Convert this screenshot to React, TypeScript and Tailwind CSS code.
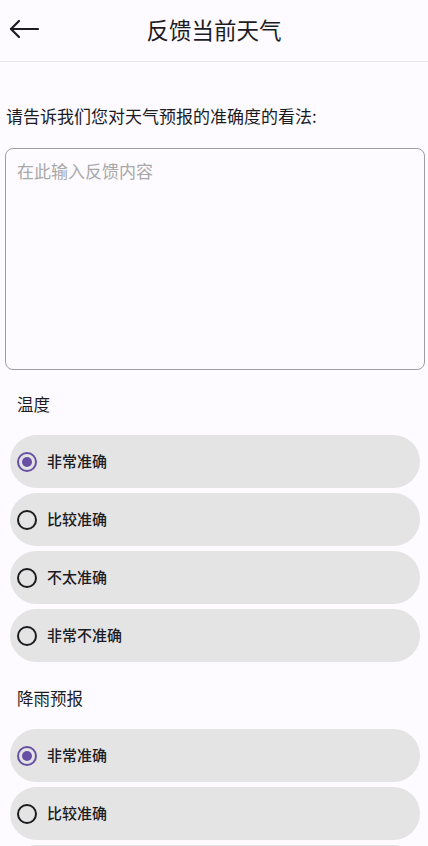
import React, { useState } from "react";

const font = { fontFamily: '"Noto Sans CJK SC", "Noto Sans", sans-serif' };

function Radio({ checked }: { checked: boolean }) {
  return checked ? (
    <span className="flex h-[20px] w-[20px] items-center justify-center rounded-full border-[2.5px] border-[#6750a4]">
      <span className="h-[10px] w-[10px] rounded-full bg-[#6750a4]" />
    </span>
  ) : (
    <span className="h-[20px] w-[20px] rounded-full border-[2.5px] border-[#1c1b1f]" />
  );
}

function Group({ title, options, value, top }: { title: string; options: string[]; value: number; top: string }) {
  const [sel, setSel] = useState(value);
  return (
    <div className="flex flex-col">
      <div className={`pl-[17px] pb-[19px] text-[16.5px] leading-[24px] text-[#1c1b1f] ${top}`}>{title}</div>
      <div className="flex flex-col gap-[5px] pl-[10px] pr-[8px]">
        {options.map((o, i) => (
          <button
            key={o}
            onClick={() => setSel(i)}
            className="flex h-[53px] items-center gap-[10px] rounded-full bg-[#e4e4e4] pl-[7px] text-left"
          >
            <Radio checked={sel === i} />
            <span className="text-[15px] font-medium text-[#1c1b1f]">{o}</span>
          </button>
        ))}
      </div>
    </div>
  );
}

export default function App() {
  const opts = ["非常准确", "比较准确", "不太准确", "非常不准确"];
  return (
    <div className="min-h-[846px] w-[428px] overflow-hidden bg-[#fdfbff]" style={font}>
      <div className="relative flex h-[62px] justify-center border-b border-[#e8e6ea] pt-[13px]">
        <svg className="absolute left-[9px] top-[17px]" width="30" height="24" viewBox="0 0 30 24" fill="none" stroke="#1c1b1f" strokeWidth="2.2" strokeLinecap="round" strokeLinejoin="round">
          <path d="M2 12H29" />
          <path d="M10 4L2 12L10 20" />
        </svg>
        <span className="text-[22.5px] leading-[32px] text-[#1c1b1f]">反馈当前天气</span>
      </div>
      <div className="pl-[6px] pt-[42px] text-[17px] leading-[24px] text-[#1c1b1f]">请告诉我们您对天气预报的准确度的看法:</div>
      <div className="px-[5px] pt-[20px]">
        <textarea
          placeholder="在此输入反馈内容"
          className="block h-[222px] w-[420px] resize-none rounded-[8px] border border-[#9e9e9e] bg-transparent px-[11px] pt-[9px] text-[17px] leading-[26px] text-[#1c1b1f] outline-none placeholder:text-[#a8a8a8]"
          style={font}
        />
      </div>
      <Group title="温度" options={opts} value={0} top="pt-[22px]" />
      <Group title="降雨预报" options={opts} value={0} top="pt-[24px]" />
    </div>
  );
}
